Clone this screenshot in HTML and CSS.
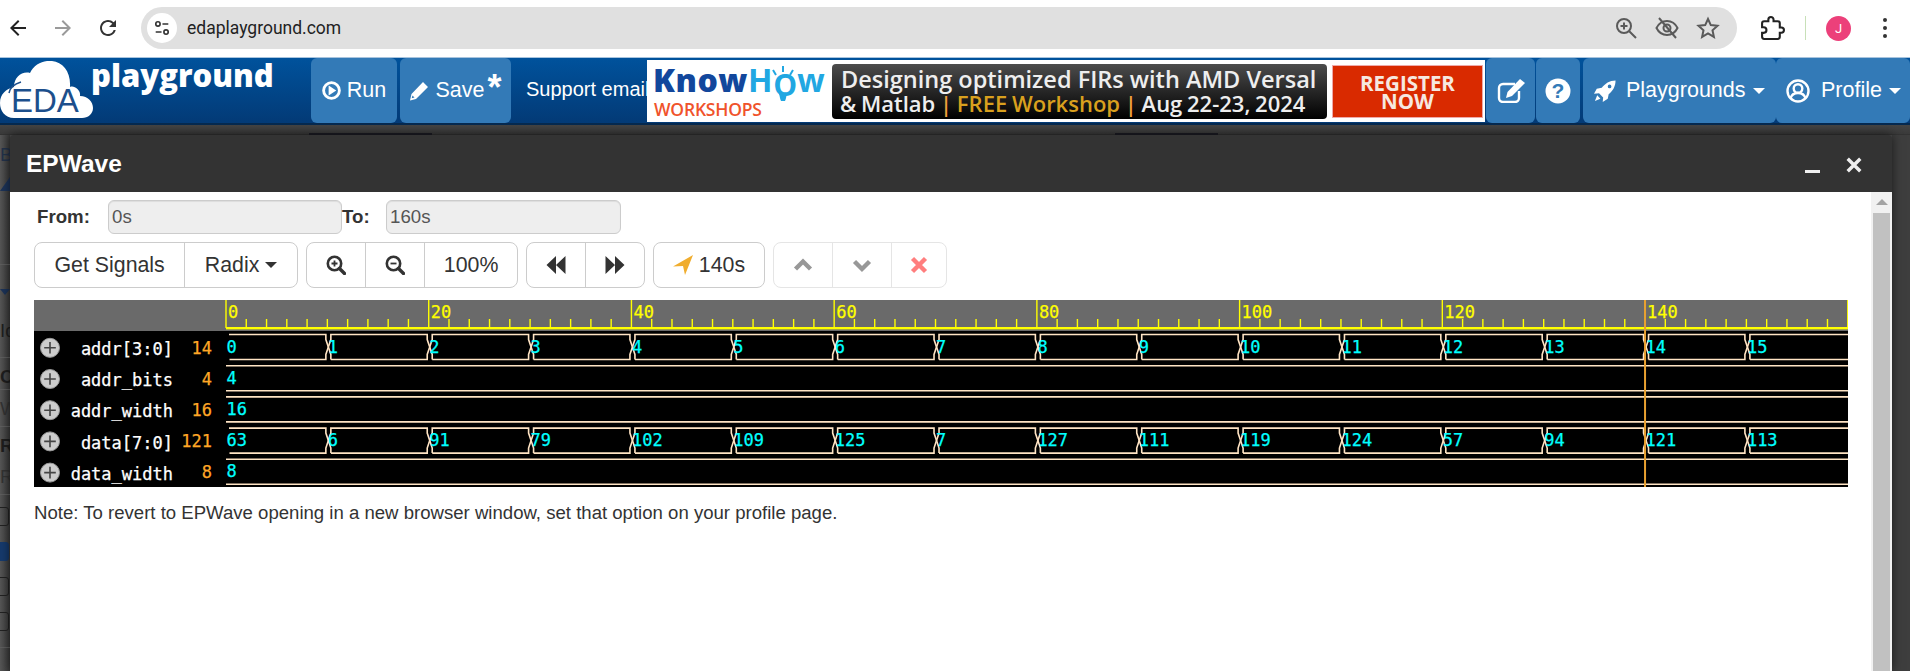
FILE: index.html
```html
<!DOCTYPE html>
<html>
<head>
    <meta charset="UTF-8">
    <meta name="viewport" content="width=device-width, initial-scale=1.0">
    <title>EPWave - EDA Playground</title>
    <link rel="stylesheet" href="styles.css">
</head>
<body>
    <div class="chrome">
        <svg class="chrome-icon back" viewBox="0 0 24 24"><path d="M20 11H7.83l5.59-5.59L12 4l-8 8 8 8 1.41-1.41L7.83 13H20v-2z"/></svg>
        <svg class="chrome-icon forward" viewBox="0 0 24 24"><path d="M12 4l-1.41 1.41L16.17 11H4v2h12.17l-5.58 5.59L12 20l8-8z"/></svg>
        <svg class="chrome-icon reload" viewBox="0 0 24 24"><path d="M17.65 6.35A7.958 7.958 0 0 0 12 4c-4.42 0-7.99 3.58-7.99 8s3.57 8 7.99 8c3.73 0 6.84-2.55 7.73-6h-2.08A5.99 5.99 0 0 1 12 18c-3.31 0-6-2.69-6-6s2.69-6 6-6c1.66 0 3.14.69 4.22 1.78L13 11h7V4l-2.35 2.35z"/></svg>
        <div class="address">
            <span class="site-info">
                <svg viewBox="0 0 20 20"><circle cx="5.5" cy="5.5" r="2.4"/><path d="M10.5 5.5H17M3 14.500H9.500"/><circle cx="14.500" cy="14.500" r="2.4"/></svg>
            </span>
            <span class="url">edaplayground.com</span>
            <span class="address-icons">
                <svg viewBox="0 0 24 24"><circle cx="10" cy="10" r="7"/><path d="M15 15l7 7M10 6.500v7M6.500 10h7"/></svg>
                <svg viewBox="0 0 24 24"><path d="M1.500 12C4 7 8 5 12 5s8 2 10.500 7c-2.500 5-6.500 7-10.500 7S4 17 1.500 12z"/><circle cx="12" cy="12" r="3.500"/><path d="M4 2l17 20"/></svg>
                <svg viewBox="0 0 24 24"><path d="M12 3l2.800 6.100 6.700.7-5 4.500 1.400 6.600L12 17.500l-5.900 3.400 1.400-6.600-5-4.500 6.700-.7z"/></svg>
            </span>
        </div>
        <svg class="puzzle" viewBox="0 0 24 24"><path d="M20.500 11H19V7a2 2 0 0 0-2-2h-4V3.500a2.500 2.500 0 0 0-5 0V5H4a2 2 0 0 0-2 2v3.800h1.500a2.700 2.700 0 0 1 0 5.400H2V20a2 2 0 0 0 2 2h13a2 2 0 0 0 2-2v-4h1.500a2.500 2.500 0 0 0 0-5z"/></svg>
        <span class="divider"></span>
        <span class="avatar">J</span>
        <span class="dots"><i></i><i></i><i></i></span>
    </div>

    <div class="nav">
        <a class="logo">
            <svg class="cloud" viewBox="0 0 94 58">
                <path d="M14 57C5 57 0 50 0 42 0 33 6 28 14 26 14 16 22 10 30 12 34 3 44-1 52 0 63 1 71 11 70 26 74 24 81 29 80 35 88 35 93 41 93 47 93 53 88 57 82 57Z"/>
                <path class="cloud-line" d="M9 32C10 27 14 23 21 21"/>
                <text x="11" y="51">EDA</text>
            </svg>
            <span class="logo-word">playground</span>
        </a>
        <a class="nav-btn run">
            <svg viewBox="0 0 20 20"><circle cx="10" cy="10" r="8.300"/><path class="solid" d="M7 4.800l8 5.200-8 5.200z"/></svg>Run
        </a>
        <a class="nav-btn save">
            <svg viewBox="0 0 20 20"><path class="solid" d="M14 1l5 5L7 18l-6 1.500L2.500 13zM3.500 14.500l-.8 2.800 2.800-.8z" fill-rule="evenodd"/></svg>Save<sup>*</sup>
        </a>
        <div class="support">Support email</div>
        <div class="banner">
            <div class="knowhow">
                <div class="knowhow-word"><b>Know</b><em>H<span class="bulb-o">o</span>w</em></div>
                <svg class="bulb" viewBox="0 0 30 40"><path d="M15 0v6M5 4l3 5M25 4l-3 5"/><path class="bulb-stem" d="M11 28c1 3 1 5 2 7h4c1-2 1-4 2-7z"/></svg>
                <div class="workshops">WORKSHOPS</div>
            </div>
            <div class="promo">
                <div>Designing optimized FIRs with AMD Versal</div>
                <div class="promo-sub">&amp; Matlab <i>|</i> <span>FREE Workshop</span> <i>|</i> Aug 22-23, 2024</div>
            </div>
            <div class="register">REGISTER<br>NOW</div>
        </div>
        <a class="nav-btn square edit">
            <svg viewBox="0 0 30 24"><path d="M19 5H7a4 4 0 0 0-4 4v10a4 4 0 0 0 4 4h12a4 4 0 0 0 4-4v-7"/><path class="solid" d="M24 0l5 4-13 13-6 2 1.500-6z"/></svg>
        </a>
        <a class="nav-btn square help">
            <svg viewBox="0 0 26 26"><circle class="solid" cx="13" cy="13" r="12.500"/><text x="13" y="20">?</text></svg>
        </a>
        <a class="nav-btn menu playgrounds">
            <svg viewBox="0 0 24 24"><path class="solid" d="M23.500.500C17 .500 12 4 8.500 8.500L3 9.500 0 15l5.500-.5 4.500 4.500-.5 5 5.500-3.500 1-5C20.500 12 23.500 7 23.500.500zM17 5a2 2 0 1 1 0 4 2 2 0 0 1 0-4zM3.500 16.500L1 23l6-2.500z" fill-rule="evenodd"/></svg>Playgrounds<span class="caret"></span>
        </a>
        <a class="nav-btn menu profile">
            <svg viewBox="0 0 24 24"><circle cx="12" cy="12" r="10.500"/><circle cx="12" cy="9.500" r="4.300"/><path d="M4.500 19.500c1-4 4-5.500 7.500-5.500s6.500 1.500 7.500 5.500"/></svg>Profile<span class="caret"></span>
        </a>
    </div>

    <div class="stage">
        <div class="under">
            <div class="under-tabs"><span></span><span></span></div>
            <div class="under-left">
                <div class="u-b">B</div>
                <svg class="u-tri" viewBox="0 0 10 14"><path d="M0 14L10 0v14z"/></svg>
                <hr class="u-a">
                <div class="u-caret"></div>
                <div class="u-id">Id</div>
                <hr>
                <div class="u-c">C</div>
                <hr>
                <div class="u-w">W</div>
                <hr>
                <div class="u-c">R</div>
                <div class="u-w">R</div>
                <hr>
                <div class="u-check first"></div>
                <div class="u-check on"></div>
                <div class="u-check"></div>
                <div class="u-check"></div>
                <hr class="u-end">
            </div>
        </div>

        <div class="modal">
            <div class="modal-title">
                <span class="modal-name">EPWave</span>
                <span class="modal-min"></span>
                <svg class="modal-close" viewBox="0 0 14 14"><path d="M1.500 1.500l11 11M12.500 1.500l-11 11"/></svg>
            </div>
            <div class="modal-body">
                <div class="pane">
                    <div class="range">
                        <label class="from">From:</label>
                        <input class="time t-from" value="0s" readonly>
                        <label class="to">To:</label>
                        <input class="time t-to" value="160s" readonly>
                    </div>
                    <div class="toolbar">
                        <div class="group main">
                            <button>Get Signals</button>
                            <button>Radix<span class="caret dark"></span></button>
                        </div>
                        <div class="group">
                            <button><svg viewBox="0 0 20 20"><circle cx="8.500" cy="8.500" r="6.700"/><path class="handle" d="M13.500 13.500l5 5"/><path class="thin" d="M8.500 5.500v6M5.500 8.500h6"/></svg></button>
                            <button><svg viewBox="0 0 20 20"><circle cx="8.500" cy="8.500" r="6.700"/><path class="handle" d="M13.500 13.500l5 5"/><path class="thin" d="M5.500 8.500h6"/></svg></button>
                            <button>100%</button>
                        </div>
                        <div class="group">
                            <button><svg viewBox="0 0 20 20"><path class="fill" d="M10 1L.5 10l9.500 9zM19.500 1L10 10l9.500 9z"/></svg></button>
                            <button><svg viewBox="0 0 20 20"><path class="fill" d="M.5 1L10 10l-9.500 9zM10 1l9.500 9-9.500 9z"/></svg></button>
                        </div>
                        <div class="group">
                            <button class="goto"><svg viewBox="0 0 20 20"><path class="arrow" d="M0 11.500L20 0 12 20 10 11z"/></svg>140s</button>
                        </div>
                        <div class="group muted">
                            <button><svg viewBox="0 0 20 20"><path class="chev" d="M2.500 14L10 6.500 17.500 14"/></svg></button>
                            <button><svg viewBox="0 0 20 20"><path class="chev" d="M2.500 6.500L10 14l7.500-7.500"/></svg></button>
                            <button class="last"><svg viewBox="0 0 20 20"><path class="cross" d="M3.500 3.500l13 13M16.500 3.500l-13 13"/></svg></button>
                        </div>
                    </div>
                    <svg id="wave" class="wave" width="1814" height="187" viewBox="0 0 1814 187"></svg>
                    <p class="note">Note: To revert to EPWave opening in a new browser window, set that option on your profile page.</p>
                </div>
                <div class="scrollbar">
                    <span class="scroll-up"></span>
                    <span class="scroll-thumb"></span>
                </div>
            </div>
        </div>
    </div>
    <script src="script.js"></script>
</body>
</html>
```

FILE: styles.css
```css
html, body {
    margin: 0;
    height: 671px;
    overflow: hidden;
}
body {
    display: flex;
    flex-direction: column;
    font-family: "Liberation Sans", Arial, sans-serif;
    color: #333;
    background: #3c3c3c;
}
svg {
    display: block;
}

/* browser bar */
.chrome {
    height: 57px;
    flex: none;
    background: #fff;
    display: flex;
    align-items: center;
    padding-bottom: 1px;
    box-sizing: border-box;
}
.chrome-icon {
    width: 24px;
    height: 24px;
    fill: #222;
    flex: none;
}
.back { margin-left: 6px; }
.forward { margin-left: 21px; fill: #9a9a9a; }
.reload { margin-left: 21px; fill: #333; }
.address {
    margin-left: 21px;
    width: 1596px;
    height: 42px;
    flex: none;
    border-radius: 21px;
    background: #e0e0e0;
    display: flex;
    align-items: center;
    margin-top: 0;
}
.site-info {
    width: 30px;
    height: 30px;
    margin-left: 6px;
    border-radius: 50%;
    background: #fff;
    display: flex;
    align-items: center;
    justify-content: center;
}
.site-info svg {
    width: 18px;
    height: 18px;
    fill: none;
    stroke: #333;
    stroke-width: 1.8;
}
.url {
    margin-left: 10px;
    font-family: Roboto, sans-serif;
    font-size: 17.5px;
    color: #222;
}
.address-icons {
    margin-left: auto;
    margin-right: 17px;
    display: flex;
    gap: 17px;
}
.address-icons svg {
    width: 24px;
    height: 24px;
    fill: none;
    stroke: #5a5a5a;
    stroke-width: 2;
}
.puzzle {
    width: 25px;
    height: 25px;
    margin-left: 23px;
    fill: none;
    stroke: #222;
    stroke-width: 2;
}
.divider {
    width: 1px;
    height: 24px;
    margin-left: 20px;
    background: #c8e0b8;
}
.avatar {
    width: 25px;
    height: 25px;
    margin-left: 20px;
    border-radius: 50%;
    background: #ec407a;
    color: #fff;
    font-family: Roboto, sans-serif;
    font-size: 13px;
    display: flex;
    align-items: center;
    justify-content: center;
}
.dots {
    margin-left: 32px;
    display: flex;
    flex-direction: column;
    gap: 4px;
}
.dots i {
    width: 4px;
    height: 4px;
    border-radius: 50%;
    background: #333;
}

/* site nav */
.nav {
    height: 68px;
    flex: none;
    box-sizing: border-box;
    display: flex;
    background: linear-gradient(#00529c, #033a76);
    border-top: 1px solid #a8c4de;
    border-bottom: 2px solid #05294f;
    color: #fff;
    font-size: 21.5px;
}
.logo {
    width: 311px;
    flex: none;
    position: relative;
}
.cloud {
    position: absolute;
    left: 0;
    top: 3px;
    width: 94px;
    height: 58px;
    fill: #fff;
}
.cloud text {
    font-size: 33px;
    fill: #1c4f8c;
}
.cloud-line {
    fill: none;
    stroke: #1c4f8c;
    stroke-width: 1.5;
}
.logo-word {
    position: absolute;
    left: 91px;
    top: -3px;
    font-family: "Open Sans", sans-serif;
    font-weight: 800;
    font-size: 31px;
    line-height: 40px;
}
.nav-btn {
    background: #337ab7;
    border-radius: 6px;
    height: 65px;
    flex: none;
    display: flex;
    align-items: center;
    justify-content: center;
    box-sizing: border-box;
}
.nav-btn svg {
    flex: none;
    fill: none;
    stroke: #fff;
    stroke-width: 2.4;
}
.nav-btn .solid {
    fill: #fff;
    stroke: none;
}
.run {
    width: 86px;
    gap: 6px;
}
.run svg {
    width: 19px;
    height: 19px;
    stroke-width: 3;
}
.save {
    width: 111px;
    margin-left: 3px;
    gap: 6px;
}
.save svg {
    width: 20px;
    height: 20px;
}
.save sup {
    font-size: 36px;
    font-weight: bold;
    line-height: 0;
    margin-left: -3px;
    position: relative;
    top: -3px;
    vertical-align: top;
}
.support {
    width: 121px;
    margin-left: 15px;
    flex: none;
    overflow: hidden;
    white-space: nowrap;
    font-size: 20px;
    line-height: 63px;
}
.banner {
    width: 838px;
    height: 62px;
    margin-top: 2px;
    flex: none;
    background: #fff;
    display: flex;
    align-items: flex-start;
    position: relative;
    font-family: "Open Sans", sans-serif;
}
.knowhow {
    width: 185px;
    flex: none;
    position: relative;
}
.knowhow-word {
    position: absolute;
    left: 6px;
    top: 1px;
    font-size: 32px;
    line-height: 38px;
    font-weight: 700;
    letter-spacing: .5px;
    white-space: nowrap;
}
.knowhow-word b { color: #12479c; }
.knowhow-word em { color: #21a7e2; font-style: normal; }
.bulb-o {
    font-size: 40px;
    font-weight: 600;
    line-height: 0;
    letter-spacing: 0;
    position: relative;
    top: 4px;
}
.bulb {
    position: absolute;
    left: 121px;
    top: 6px;
    width: 30px;
    height: 40px;
    fill: none;
    stroke: #21a7e2;
    stroke-width: 2;
}
.bulb-stem {
    fill: #21a7e2;
    stroke: none;
}
.workshops {
    position: absolute;
    left: 7px;
    top: 39px;
    font-size: 17.5px;
    line-height: 20px;
    font-weight: 600;
    color: #f0532b;
    letter-spacing: -.2px;
}
.promo {
    width: 495px;
    height: 55px;
    margin-top: 4px;
    flex: none;
    box-sizing: border-box;
    padding: 3px 0 0 9px;
    border-radius: 4px;
    background: linear-gradient(#4c4c4c, #000);
    font-size: 23.5px;
    font-weight: 600;
    line-height: 24px;
    white-space: nowrap;
    color: #eee;
}
.promo-sub {
    font-size: 22px;
    word-spacing: -1px;
    margin-left: -1px;
}
.promo i {
    font-style: normal;
    color: #f0a03c;
}
.promo span {
    color: #d9a01e;
}
.register {
    width: 149px;
    height: 51px;
    margin: 6px 0 0 6px;
    flex: none;
    background: #d92a00;
    outline: 1px solid #eaa;
    text-align: center;
    font-size: 20.5px;
    font-weight: 700;
    line-height: 18px;
    padding-top: 8px;
    box-sizing: border-box;
    color: #f6e8e0;
}
.square {
    margin-left: 1px;
}
.edit {
    width: 49px;
}
.edit svg {
    width: 30px;
    height: 24px;
}
.help {
    width: 44px;
}
.help svg {
    width: 26px;
    height: 26px;
}
.help text {
    font-size: 21px;
    font-weight: bold;
    text-anchor: middle;
    fill: #337ab7;
    stroke: none;
}
.menu {
    justify-content: flex-start;
}
.playgrounds {
    width: 193px;
    margin-left: 3px;
    padding-left: 11px;
}
.playgrounds svg {
    width: 22px;
    height: 22px;
    margin-right: 10px;
}
.profile {
    width: 134px;
    padding-left: 10px;
}
.profile svg {
    width: 24px;
    height: 24px;
    margin-right: 11px;
}
.caret {
    width: 0;
    height: 0;
    margin-left: 7px;
    border-top: 6px solid #fff;
    border-left: 6px solid transparent;
    border-right: 6px solid transparent;
}
.caret.dark {
    border-top-color: #333;
    margin-left: 6px;
}

/* page behind the dialog, dimmed */
.stage {
    flex: 1;
    position: relative;
    overflow: hidden;
}
.under {
    height: 100%;
    background: #3e3e3e;
}
.under-tabs {
    height: 10px;
    display: flex;
    border-bottom: 1px solid #333;
    box-sizing: border-box;
    background: linear-gradient(#444, #3a3a3a);
}
.under-tabs span {
    width: 123px;
    height: 2px;
    margin: 8px 0 0 309px;
    background: #1c1c24;
}
.under-tabs span + span {
    width: 103px;
    margin-left: 683px;
}
.under-left {
    width: 10px;
    overflow: hidden;
    height: 536px;
    background: linear-gradient(90deg, #565656, #3a3a3a);
    font-size: 18.67px;
    color: #1e1e1e;
}
.under-left hr {
    margin: 0;
    border: 0;
    border-top: 1px solid #5e5e5e;
    width: 10px;
}
.under-left div {
    line-height: 24px;
}
.u-b {
    margin-top: 8px;
    color: #23324a;
}
.u-tri {
    width: 10px;
    height: 14px;
    margin-top: 10px;
    fill: #1c3358;
}
.under-left .u-a { margin-top: 73px; }
.under-left .u-caret {
    width: 0;
    height: 0;
    margin-top: 24px;
    border-top: 6px solid #1c3358;
    border-left: 5px solid transparent;
    border-right: 5px solid transparent;
}
.under-left .u-id { margin-top: 24px; margin-bottom: 14px; }
.under-left .u-c { font-weight: bold; margin: 7px 0 0; }
.under-left .u-w { color: #333; margin: 7px 0 5px; }
.under-left .u-check {
    width: 14px;
    height: 17px;
    margin: 0 0 16px -7px;
    border: 1px solid #222;
    border-radius: 3px;
}
.under-left .u-check.first { margin-top: 12px; }
.under-left .u-check.on {
    background: #163a6c;
    border-color: #163a6c;
}
.under-left .u-end { margin-top: 11px; }

/* dialog */
.modal {
    position: absolute;
    left: 10px;
    top: 10px;
    width: 1882px;
    bottom: 0;
    display: flex;
    flex-direction: column;
    box-shadow: 0 0 10px rgba(0, 0, 0, 0.6);
}
.modal-title {
    height: 57px;
    flex: none;
    background: #333;
    color: #fff;
    display: flex;
    align-items: center;
    border-radius: 4px 4px 0 0;
    position: relative;
}
.modal-name {
    margin-left: 16px;
    font-size: 24.5px;
    font-weight: bold;
}
.modal-min {
    position: absolute;
    left: 1795px;
    top: 35px;
    width: 15px;
    height: 3px;
    background: #f0f0f0;
}
.modal-close {
    position: absolute;
    left: 1836px;
    top: 22px;
    width: 16px;
    height: 16px;
    fill: none;
    stroke: #eee;
    stroke-width: 3;
}
.modal-body {
    flex: 1;
    display: flex;
    background: #fff;
    min-height: 0;
}
.pane {
    flex: 1;
    padding: 8px 0 0 24px;
    font-size: 18.67px;
}
.range {
    height: 34px;
    display: flex;
    align-items: center;
}
.range label {
    font-weight: bold;
    box-sizing: border-box;
}
.from {
    width: 74px;
    padding-left: 3px;
}
.to {
    width: 44px;
}
.time {
    box-sizing: border-box;
    height: 34px;
    padding: 0 3px;
    border: 1px solid #ccc;
    border-radius: 6px;
    background: #eee;
    font: 18.67px "Liberation Sans", Arial, sans-serif;
    color: #555;
    box-shadow: inset 0 1px 1px rgba(0, 0, 0, 0.075);
}
.t-from { width: 234px; }
.t-to { width: 235px; }
.toolbar {
    margin-top: 8px;
    display: flex;
    gap: 8px;
}
.group {
    display: flex;
    height: 46px;
    box-sizing: border-box;
    border: 1px solid #ccc;
    border-radius: 8px;
}
.group button {
    border: 0;
    border-left: 1px solid #ccc;
    background: none;
    padding: 0 19px;
    font: 21.33px "Liberation Sans", Arial, sans-serif;
    color: #333;
    display: flex;
    align-items: center;
}
.group button:first-child {
    border-left: 0;
}
.group.main button {
    padding: 0 19.500px;
}
.group button.last {
    padding: 0 17px;
}
.group button.goto {
    padding: 0 18.500px;
}
.group svg {
    width: 20px;
    height: 20px;
    fill: none;
    stroke: #333;
    stroke-width: 2.6;
}
.group .handle { stroke-width: 3.4; stroke-linecap: round; }
.group .thin { stroke-width: 1.8; }
.group .fill { fill: #333; stroke: none; }
.group .arrow { fill: #f0ad2e; stroke: none; }
.group .chev { stroke-width: 4.4; }
.group .cross { stroke: #f00; stroke-width: 4.4; }
.goto svg {
    margin-right: 6px;
}
.muted {
    opacity: .5;
}
.wave {
    margin-top: 12px;
}
.wave .ruler {
    fill: #6a6a6a;
}
.wave .ground {
    fill: #000;
}
.wave text {
    font-family: "DejaVu Sans Mono", monospace;
    font-size: 17px;
    stroke-width: .25;
}
.wave .tick {
    stroke: #ff0;
    stroke-width: 1.4;
}
.wave .ruler-line {
    fill: #ff0;
}
.wave .time-label { fill: #ff0; stroke: #ff0; }
.wave .name { fill: #fff; stroke: #fff; text-anchor: end; }
.wave .now { fill: #ffa726; stroke: #ffa726; text-anchor: end; }
.wave .val { fill: #0ff; stroke: #0ff; }
.wave .bus {
    fill: none;
    stroke: #ffe4c4;
    stroke-width: 1.6;
}
.wave .expand {
    fill: #ccc;
    stroke: #999;
}
.wave .plus {
    stroke: #444;
    stroke-width: 1.6;
}
.wave .cursor {
    fill: #e8a030;
}
.note {
    margin: 13px 0 0;
    line-height: 26px;
    font-size: 18.58px;
}
.scrollbar {
    width: 21px;
    flex: none;
    background: #f1f1f1;
    box-sizing: border-box;
    padding: 0 2px;
    position: relative;
}
.scroll-up {
    display: block;
    width: 0;
    height: 0;
    margin: 7px auto 0;
    border-bottom: 6px solid #a3a3a3;
    border-left: 6px solid transparent;
    border-right: 6px solid transparent;
}
.scroll-thumb {
    display: block;
    height: 458px;
    margin-top: 8px;
    background: #c1c1c1;
}
```

FILE: script.js
```js
let wave = document.getElementById('wave');

const X0 = 192;
const UNIT = 10.136;
const END = 1814;
const RULER = 31;
const PITCH = 31.2;

let signals = [
    ['addr[3:0]', '14', Array.from({ length: 16 }, (_, i) => i)],
    ['addr_bits', '4', [4]],
    ['addr_width', '16', [16]],
    ['data[7:0]', '121', [63, 6, 91, 79, 102, 109, 125, 7, 127, 111, 119, 124, 57, 94, 121, 113]],
    ['data_width', '8', [8]]
];

let svg = `<rect class="ruler" width="${END}" height="${RULER}"/>`;
svg += `<rect class="ground" y="${RULER}" width="${END}" height="156"/>`;

// time ruler, a tick every 2s and a label every 20s
for (let t = 0; t <= 160; t += 2) {
    let x = X0 + t * UNIT;
    let top = t % 20 === 0 ? 0 : 19;
    svg += `<line class="tick" x1="${x}" x2="${x}" y1="${top}" y2="28"/>`;
    if (t % 20 === 0 && t < 160) {
        svg += `<text class="time-label" x="${x + 2}" y="18">${t}</text>`;
    }
}
svg += `<rect class="ruler-line" x="${X0}" y="27" width="${END - X0}" height="2.4"/>`;

function busPath(a, b, top, bottom, first, last) {
    let mid = (top + bottom) / 2;
    let d = '';
    if (first) {
        d += `M${a + 2} ${top}`;
    } else {
        d += `M${a + 2.5} ${bottom}v-5L${a} ${mid}L${a + 2.5} ${top + 5}V${top}`;
    }
    if (last) {
        return `${d}H${END}M${END} ${bottom}H${a + 2.5}`;
    }
    return `${d}H${b - 2.5}v5L${b} ${mid}L${b - 2.5} ${bottom - 5}V${bottom}H${a + 2.5}`;
}

signals.forEach(([name, now, values], i) => {
    let y = i * PITCH;
    let top = 34.5 + y;
    let bottom = 59.5 + y;
    svg += `<circle class="expand" cx="16" cy="${47.8 + y}" r="9.5"/>`;
    svg += `<path class="plus" d="M16 ${42 + y}v11.600M10.200 ${47.8 + y}h11.600"/>`;
    svg += `<text class="name" x="139" y="${55 + y}">${name}</text>`;
    svg += `<text class="now" x="178" y="${53.500 + y}">${now}</text>`;

    if (values.length === 1) {
        svg += `<path class="bus" d="M${X0} ${top}H${END}M${X0} ${bottom}H${END}"/>`;
    }
    values.forEach((value, n) => {
        let a = X0 + 1 + n * 10 * UNIT;
        let b = a + 10 * UNIT;
        if (values.length > 1) {
            svg += `<path class="bus" d="${busPath(a, b, top, bottom, n === 0, n === values.length - 1)}"/>`;
        }
        svg += `<text class="val" x="${a - 0.5}" y="${52.500 + y}">${value}</text>`;
    });
});

// cursor sits on top of the traces
svg += `<rect class="cursor" x="${X0 + 140 * UNIT - 1}" width="2" height="187"/>`;
wave.innerHTML = svg;
```
